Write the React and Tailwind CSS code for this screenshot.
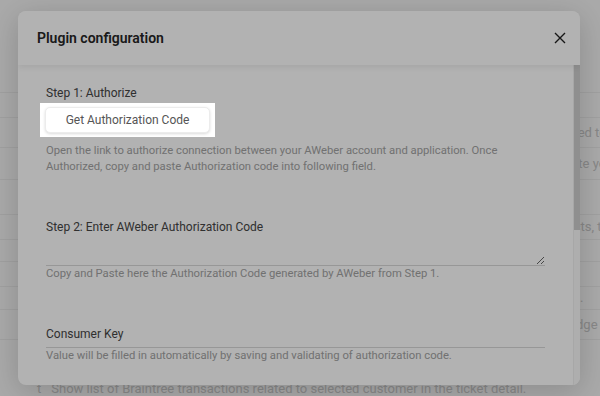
import { useState } from "react";

const pageRows = [
  { h: "h-[25px]", pl: "pl-[552px]", text: "" },
  { h: "h-[30px]", pl: "pl-[552px]", text: "related to the selected ticket" },
  { h: "h-[32px]", pl: "pl-[561px]", text: "write your tasks" },
  { h: "h-[35px]", pl: "pl-[552px]", text: "" },
  { h: "h-[25px]", pl: "pl-[541px]", text: "contacts, tags and orders" },
  { h: "h-[22px]", pl: "pl-[552px]", text: "" },
  { h: "h-[25px]", pl: "pl-[552px]", text: "" },
  { h: "h-[23px]", pl: "pl-[540px]", text: "via API." },
  { h: "h-[30px]", pl: "pl-[535px]", text: "knowledge base" },
  { h: "h-[41px]", pl: "pl-[552px]", text: "" },
];

function Field({ label, help, multiline }) {
  return (
    <div className="mt-[43px]">
      <label className="block text-[12px] leading-[18px] text-[#454545]">{label}</label>
      {multiline ? (
        <textarea
          className="mt-[2px] block h-[28px] w-full resize-y border-b border-[#d9d9d9] bg-transparent text-[12px] outline-none"
          rows={1}
        />
      ) : (
        <input
          readOnly
          className="block h-[5px] w-full border-b border-[#d9d9d9] bg-transparent outline-none"
        />
      )}
      <p className="text-[11.25px] leading-[16px] text-[#a3a3a3]">{help}</p>
    </div>
  );
}

export default function App() {
  const [open] = useState(true);

  return (
    <div className="relative h-[396px] w-[600px] overflow-hidden bg-[#f3f3f3] font-['Roboto','Liberation_Sans',sans-serif]">
      {/* page behind the modal */}
      <div className="pt-[92px]">
        {pageRows.map((row, i) => (
          <div
            key={i}
            className={`${row.h} ${row.pl} flex items-center overflow-hidden whitespace-nowrap border-t border-[#e6e6e6] text-[13px] text-[#c2c2c2]`}
          >
            {row.text}
          </div>
        ))}
        <div className="flex items-center gap-[10px] whitespace-nowrap pl-[37px] text-[13px] leading-[18px] text-[#c4c4c4]">
          <span>t</span>
          <span>Show list of Braintree transactions related to selected customer in the ticket detail.</span>
        </div>
      </div>

      {open && (
        <div className="absolute left-[18px] top-[11px] flex h-[374px] w-[562px] flex-col overflow-hidden rounded-lg bg-white shadow-[0_6px_30px_rgba(0,0,0,0.18)]">
          <div className="relative z-[1] flex h-[54px] shrink-0 items-center justify-between bg-white pl-[19px] pr-[8px] shadow-[0_2px_6px_rgba(0,0,0,0.08)]">
            <h2 className="text-[14px] font-semibold text-[#262626]">Plugin configuration</h2>
            <button type="button" className="flex h-[24px] w-[24px] items-center justify-center text-[#222]">
              <svg width="12" height="12" viewBox="0 0 12 12" fill="none" stroke="currentColor" strokeWidth="1.4">
                <path d="M1 1L11 11M11 1L1 11" />
              </svg>
            </button>
          </div>

          <div className="flex min-h-0 flex-1">
            <div className="flex-1 overflow-hidden px-[28px] pb-[30px]">
              <div className="pt-[19px]">
                <p className="text-[12px] leading-[18px] text-[#454545]">Step 1: Authorize</p>
                <div className="relative z-20 -ml-[6px] mt-[1px] inline-block bg-white px-[5px] py-[4px]">
                  <button
                    type="button"
                    className="h-[26px] w-[165px] rounded-[5px] border border-[#ececec] bg-white text-[12px] text-[#555] shadow-[0_1px_3px_rgba(0,0,0,0.15)]"
                  >
                    Get Authorization Code
                  </button>
                </div>
                <p className="mt-[6px] text-[11.25px] leading-[16px] text-[#a3a3a3]">
                  Open the link to authorize connection between your AWeber account and application. Once
                  Authorized, copy and paste Authorization code into following field.
                </p>
              </div>

              <Field
                label="Step 2: Enter AWeber Authorization Code"
                help="Copy and Paste here the Authorization Code generated by AWeber from Step 1."
                multiline
              />
              <Field
                label="Consumer Key"
                help="Value will be filled in automatically by saving and validating of authorization code."
              />
              <Field
                label="Consumer Secret"
                help="Value will be filled in automatically by saving and validating of authorization code."
              />
            </div>

            {/* scrollbar */}
            <div className="w-[7px] shrink-0 border-l border-[#efefef] bg-[#f9f9f9]">
              <div className="h-[165px] bg-[#cdcdcd]" />
            </div>
          </div>
        </div>
      )}

      {/* onboarding tour overlay */}
      <div className="pointer-events-none absolute inset-0 z-10 bg-black/30" />
    </div>
  );
}
